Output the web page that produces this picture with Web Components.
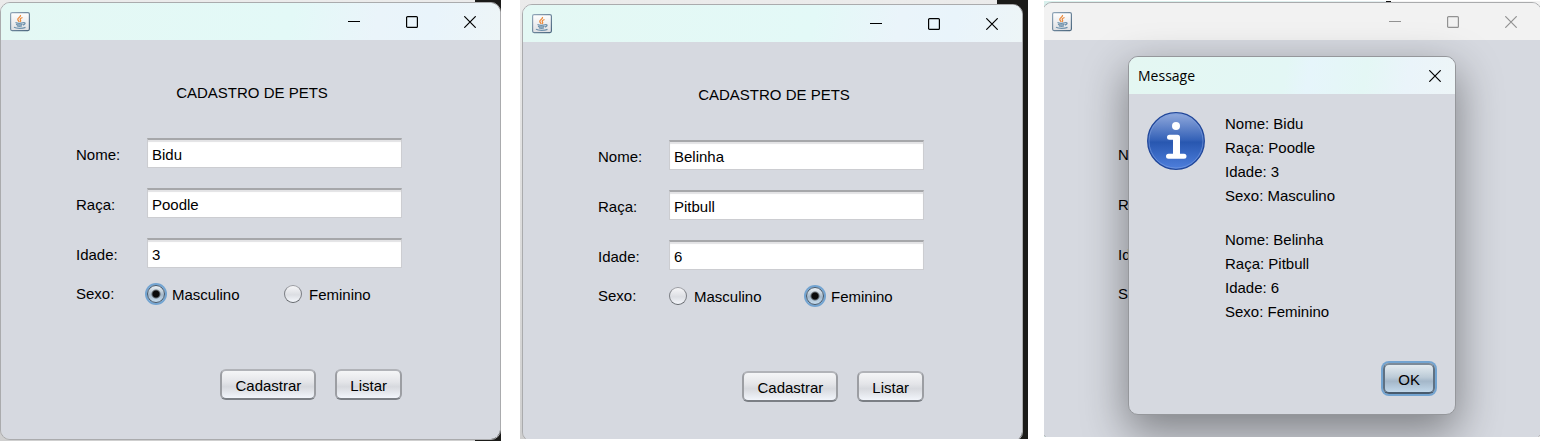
<!DOCTYPE html>
<html lang="pt-BR">
<head>
<meta charset="utf-8">
<title>Cadastro de Pets</title>
<style>
  body { margin: 0; background: #fff; color: #000; font: 15px/18px "Liberation Sans", Arial, sans-serif; }
  main { display: flex; align-items: flex-start; padding-right: 9px; }
  .first { flex: 501 1 0; }
  .second { flex: 508 1 0; margin-left: 19px; }
  .third { flex: 496 1 0; margin: 1px 0 0 16px; }
  .first app-window { margin: 2px 0 1px; }
  .second app-window { margin: 4px 5px -3px 2px; }
  .third app-window { margin: 1px -2px -3px; }
</style>
</head>
<body>
<main>
  <desktop-pane class="first"><app-window><pet-form name="Bidu" breed="Poodle" age="3" sex="m"></pet-form></app-window></desktop-pane>
  <desktop-pane class="second" wide><app-window><pet-form name="Belinha" breed="Pitbull" age="6" sex="f"></pet-form></app-window></desktop-pane>
  <desktop-pane class="third" plain>
    <app-window inactive>
      <pet-form sex="m" covered></pet-form>
      <message-dialog slot="overlay" heading="Message">
        <div>Nome: Bidu<br>Raça: Poodle<br>Idade: 3<br>Sexo: Masculino</div>
        <div>Nome: Belinha<br>Raça: Pitbull<br>Idade: 6<br>Sexo: Feminino</div>
      </message-dialog>
    </app-window>
  </desktop-pane>
</main>

<template id="desktop-pane">
  <style>
    :host { display: block; min-width: 0; overflow: hidden; --dark: 26px;
      background: linear-gradient(#1b1b19, #1b1b19) right / var(--dark) 100% no-repeat, linear-gradient(#ebebeb, #cfcfcf); }
    :host([wide]) { --dark: 31px; }
    :host([plain]) { background: linear-gradient(90deg, #d9f0ed 0 30%, #e4eef0 69%, #111 69% 70%, #f4f4f4 70%); }
    div { display: flow-root; }
  </style>
  <div><slot></slot></div>
</template>

<template id="java-icon">
  <style>:host { display: block; } svg { display: block; }</style>
  <svg width="20" height="20" viewBox="0 0 20 20" fill="none" aria-hidden="true">
    <defs><linearGradient id="g" x2="0" y2="1"><stop stop-color="#fff"/><stop offset="1" stop-color="#dedfe2"/></linearGradient>
    <linearGradient id="b" x2="1" y2="1"><stop stop-color="#92a7b9"/><stop offset="1" stop-color="#4b677f"/></linearGradient></defs>
    <rect x=".6" y=".6" width="18.8" height="18" rx="1.5" fill="url(#g)" stroke="url(#b)" stroke-width="1.2"/>
    <path d="M10.5 3c.8 2-3.2 2.7-2.700 4.500.2 1 1.200 1.500 1.200 2.500M12.500 5.500c-2 .8-2.800 1.500-2 2.700.4.6.2 1.200-.5 1.700" stroke="#ec8a3c" stroke-width="1.300"/>
    <path d="M5.500 10.500c2 .9 5.500.9 8 0M6 12.300c2 .7 4.500.7 6.500 0M7 14c1.500.5 3.500.5 5 0M13.300 10.700c2.500-.6 2.300 1.800-.3 2.300M4 15.300c2.500 1.400 8.500 1.500 11.500 0" stroke="#6f92ad" stroke-width="1.300"/>
  </svg>
</template>

<template id="app-window">
  <style>
    :host { display: block; position: relative; border: 1px solid #aaabad; border-radius: 10px; }
    .frame { border-radius: 9px; overflow: hidden; background: #d6d9e0; }
    header { display: flex; align-items: center; height: 37px; padding: 0 1px 0 9px; background: linear-gradient(100deg, #e4f8f4, #e3f9f7 58%, #eaf4fa 75%, #e9f4fb 86%, #edf5f7); color: #000; }
    :host([inactive]) header { background: #f2f2f2; color: #929292; }
    .controls { display: flex; margin-left: auto; }
    button { display: grid; place-items: center; width: 58px; height: 36px; padding: 0; border: 0; background: none; color: inherit; }
    svg { display: block; fill: none; stroke: currentColor; }
  </style>
  <div class="frame">
    <header>
      <java-icon></java-icon>
      <div class="controls">
        <button type="button" aria-label="Minimizar"><svg width="12" height="12"><path d="M0 5.500h12"/></svg></button>
        <button type="button" aria-label="Maximizar"><svg width="12" height="12"><rect x=".6" y=".6" width="10.800" height="10.800" rx="1" stroke-width="1.200"/></svg></button>
        <button type="button" aria-label="Fechar"><svg width="12" height="12"><path d="M.3.3l11.400 11.400M11.700.3L.3 11.700" stroke-width="1.200"/></svg></button>
      </div>
    </header>
    <slot></slot>
  </div>
  <slot name="overlay"></slot>
</template>

<template id="nimbus-button">
  <style>
    :host { display: block; }
    button { display: block; height: 31px; padding: 3px 13px 0; font: inherit; color: #000;
      border: 2px solid; border-color: #b1b3b8 #9c9ea3 #7b7f85; border-radius: 6px;
      background: linear-gradient(#f5f6f7, #e4e5e9 40%, #d7d9de 58%, #f2f5fb); white-space: nowrap; }
    :host([primary]) button { border-color: #7d8b99 #5f7183 #485b6e;
      background: linear-gradient(#e4ebf0, #bccbd7 45%, #a4b7c9 60%, #c2d8ea); box-shadow: 0 0 0 2px #73a4d1; }
  </style>
  <button type="button"><slot></slot></button>
</template>

<template id="pet-form">
  <style>
    :host { display: block; padding: 44px 98px 39px 75px; }
    h1 { margin: 0 -98px 36px -72px; text-align: center; font: inherit; }
    .fields { display: grid; grid-template-columns: 71px minmax(0, 1fr); row-gap: 20px; }
    .fields label { padding-top: 8px; }
    input[type=text] { box-sizing: border-box; width: 100%; height: 30px; padding: 2px 4px 0; font: inherit; color: #000; outline: 0; border: 1px solid #cccdd1; border-top: 2px solid #a6a7aa; border-radius: 0; background: #fff; box-shadow: inset 0 2px 1px #e3e3e5; }
    .sex { display: grid; grid-template-columns: 71px 137px auto; align-items: center; height: 20px; margin: 15px 0 66px; justify-content: start; }
    .sex label { display: flex; align-items: center; gap: 7px; }
    .sex span { padding-top: 3px; }
    input[type=radio] { appearance: none; width: 18px; height: 18px; margin: 0; border: 1px solid; border-color: #9a9ca1 #7c7f84 #63676c; border-radius: 50%; background: linear-gradient(#f6f6f8, #dcdee3 55%, #f4f7fc); }
    input[type=radio]:checked { border-color: #43576b; box-shadow: 0 0 0 2px #73a4d1; background: radial-gradient(circle, #0a0a0a 0 3px, transparent 5px), linear-gradient(#eef2f5, #a5b8c9 55%, #c8def0); }
    .actions { display: flex; justify-content: flex-end; gap: 19px; }
    :host([covered]) :is(h1, .sex label, .actions) { visibility: hidden; }
  </style>
  <h1>CADASTRO DE PETS</h1>
  <div class="fields">
    <label for="name">Nome:</label><input type="text" id="name">
    <label for="breed">Raça:</label><input type="text" id="breed">
    <label for="age">Idade:</label><input type="text" id="age">
  </div>
  <div class="sex" role="radiogroup" aria-labelledby="sexo">
    <div id="sexo">Sexo:</div>
    <label><input type="radio" name="sex" value="m"><span>Masculino</span></label>
    <label><input type="radio" name="sex" value="f"><span>Feminino</span></label>
  </div>
  <div class="actions"><nimbus-button>Cadastrar</nimbus-button><nimbus-button>Listar</nimbus-button></div>
</template>

<template id="message-dialog">
  <style>
    :host { position: absolute; top: 53px; left: 50%; width: 326px; margin-left: -164px; border: 1px solid #95979b; border-radius: 10px; background: #d6d9e0; box-shadow: 0 16px 44px 2px rgba(0, 0, 0, .4); }
    header { display: flex; align-items: center; justify-content: space-between; height: 37px; padding-left: 9px; border-radius: 9px 9px 0 0; background: linear-gradient(100deg, #e4f7f2, #e3f7f5 48%, #e6f5fb 55%, #e4f7f5 72%, #eaf4fa 85%, #edf5f7); }
    h2 { margin: 0; font: 14px/20px "Open Sans", "Noto Sans", sans-serif; }
    .close { display: grid; place-items: center; width: 40px; height: 36px; padding: 0; border: 0; background: none; color: #000; }
    svg { display: block; }
    .body { display: grid; grid-template-columns: 58px 1fr; gap: 20px; padding: 18px 18px 0; }
    .text { display: grid; gap: 20px; line-height: 24px; }
    footer { display: flex; justify-content: flex-end; padding: 39px 20px 20px; }
  </style>
  <header><h2></h2>
    <button class="close" type="button" aria-label="Fechar"><svg width="12" height="12" stroke="currentColor" stroke-width="1.200"><path d="M.3.3l11.400 11.400M11.700.3L.3 11.700"/></svg></button>
  </header>
  <div class="body">
    <svg width="58" height="58" viewBox="0 0 58 58" aria-hidden="true">
      <defs><linearGradient id="i" x2="0" y2="1"><stop stop-color="#93abdd"/><stop offset=".48" stop-color="#3562b8"/><stop offset=".52" stop-color="#2857b0"/><stop offset="1" stop-color="#4f80dd"/></linearGradient></defs>
      <circle cx="29" cy="29" r="28.300" fill="url(#i)" stroke="#21479a" stroke-width="1.300"/>
      <circle cx="29" cy="29" r="27" fill="none" stroke="#7c9cdd" stroke-opacity=".6"/>
      <circle cx="29" cy="14" r="4" fill="#fff"/>
      <path d="M22.500 25.300h8v17.200M21.500 44.300h15.500" fill="none" stroke="#fff" stroke-width="5" stroke-linecap="round" stroke-linejoin="round"/>
      <path d="M26 25h7v19h-7z" fill="#fff"/>
    </svg>
    <div class="text"><slot></slot></div>
  </div>
  <footer><nimbus-button primary>OK</nimbus-button></footer>
</template>

<script>
  class TemplateElement extends HTMLElement {
    constructor() {
      super();
      const template = document.getElementById(this.localName);
      this.attachShadow({ mode: "open" }).append(template.content.cloneNode(true));
    }
  }
  class DesktopPane extends TemplateElement {}
  class JavaIcon extends TemplateElement {}
  class AppWindow extends TemplateElement {}
  class NimbusButton extends TemplateElement {}
  class PetForm extends TemplateElement {
    connectedCallback() {
      for (const field of ["name", "breed", "age"]) {
        this.shadowRoot.getElementById(field).value = this.getAttribute(field) || "";
      }
      const radio = this.shadowRoot.querySelector(`[value="${this.getAttribute("sex")}"]`);
      if (radio) radio.checked = true;
    }
  }
  class MessageDialog extends TemplateElement {
    connectedCallback() {
      this.setAttribute("role", "dialog");
      this.shadowRoot.querySelector("h2").textContent = this.getAttribute("heading");
    }
  }
  customElements.define("java-icon", JavaIcon);
  customElements.define("nimbus-button", NimbusButton);
  customElements.define("pet-form", PetForm);
  customElements.define("message-dialog", MessageDialog);
  customElements.define("app-window", AppWindow);
  customElements.define("desktop-pane", DesktopPane);
</script>
</body>
</html>
